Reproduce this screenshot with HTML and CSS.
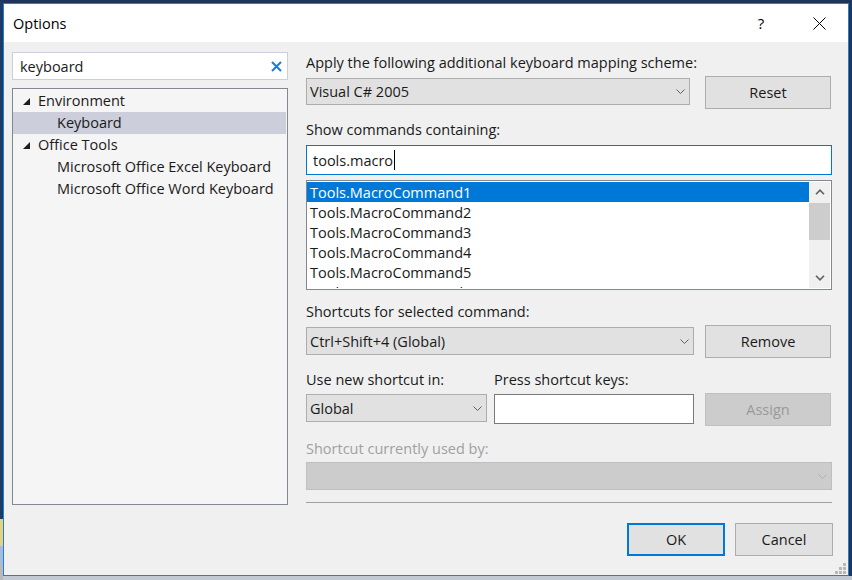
FILE: index.html
```html
<!DOCTYPE html>
<html>
<head>
<meta charset="utf-8">
<link rel="stylesheet" href="styles.css">
</head>
<body>
<div class="win">
  <div class="titlebar">
    <span class="title">Options</span>
    <span class="tb-btn help">?</span>
    <span class="tb-btn close"><svg width="13" height="13" viewBox="0 0 13 13"><path d="M0.5 0.5 L12.5 12.5 M12.5 0.5 L0.5 12.5" stroke="#000" stroke-width="1" fill="none"/></svg></span>
  </div>
  <div class="content">
    <div class="left">
      <div class="search">
        <span>keyboard</span>
        <svg class="clear" width="11" height="11" viewBox="0 0 11 11"><path d="M1 1 L10 10 M10 1 L1 10" stroke="#1e7bd6" stroke-width="2" fill="none"/></svg>
      </div>
      <div class="tree">
        <div class="node"><span class="tw"><svg width="7" height="7" viewBox="0 0 7 7"><polygon points="7,0 7,7 0,7" fill="#1e1e1e"/></svg></span>Environment</div>
        <div class="node child sel">Keyboard</div>
        <div class="node"><span class="tw"><svg width="7" height="7" viewBox="0 0 7 7"><polygon points="7,0 7,7 0,7" fill="#1e1e1e"/></svg></span>Office Tools</div>
        <div class="node child">Microsoft Office Excel Keyboard</div>
        <div class="node child">Microsoft Office Word Keyboard</div>
      </div>
    </div>
    <div class="right">
      <div class="lbl">Apply the following additional keyboard mapping scheme:</div>
      <div class="row r1">
        <div class="combo c1"><span>Visual C# 2005</span><svg class="chev" width="9" height="5" viewBox="0 0 9 5"><path d="M0.5 0.5 L4.5 4.5 L8.5 0.5" stroke="#606060" fill="none"/></svg></div>
        <div class="btn">Reset</div>
      </div>
      <div class="lbl l2">Show commands containing:</div>
      <div class="input focus"><span>tools.macro</span><span class="caret"></span></div>
      <div class="list">
        <div class="items">
          <div class="item sel">Tools.MacroCommand1</div>
          <div class="item">Tools.MacroCommand2</div>
          <div class="item">Tools.MacroCommand3</div>
          <div class="item">Tools.MacroCommand4</div>
          <div class="item">Tools.MacroCommand5</div>
          <div class="item">Tools.MacroCommand10</div>
        </div>
        <div class="sbar">
          <div class="arrow"><svg width="10" height="6" viewBox="0 0 10 6"><path d="M1 5.2 L5 1.2 L9 5.2" stroke="#606060" stroke-width="1.6" fill="none"/></svg></div>
          <div class="thumb"></div>
          <div class="track"></div>
          <div class="arrow"><svg width="10" height="6" viewBox="0 0 10 6"><path d="M1 0.8 L5 4.8 L9 0.8" stroke="#606060" stroke-width="1.6" fill="none"/></svg></div>
        </div>
      </div>
      <div class="lbl l3">Shortcuts for selected command:</div>
      <div class="row r2">
        <div class="combo c2"><span>Ctrl+Shift+4 (Global)</span><svg class="chev" width="9" height="5" viewBox="0 0 9 5"><path d="M0.5 0.5 L4.5 4.5 L8.5 0.5" stroke="#606060" fill="none"/></svg></div>
        <div class="btn">Remove</div>
      </div>
      <div class="lbl l4"><span class="lbl-a">Use new shortcut in:</span><span>Press shortcut keys:</span></div>
      <div class="row r3">
        <div class="combo c3"><span>Global</span><svg class="chev" width="9" height="5" viewBox="0 0 9 5"><path d="M0.5 0.5 L4.5 4.5 L8.5 0.5" stroke="#606060" fill="none"/></svg></div>
        <div class="input keys"></div>
        <div class="btn disabled">Assign</div>
      </div>
      <div class="lbl l5 dis">Shortcut currently used by:</div>
      <div class="combo c4 dis-combo"><span></span><svg class="chev" width="9" height="5" viewBox="0 0 9 5"><path d="M0.5 0.5 L4.5 4.5 L8.5 0.5" stroke="#b0b0b0" fill="none"/></svg></div>
      <div class="sep"></div>
      <div class="footer">
        <div class="btn fbtn ok">OK</div>
        <div class="btn fbtn">Cancel</div>
      </div>
    </div>
  </div>
  <svg class="grip" width="11" height="11" viewBox="0 0 11 11">
    <rect x="8" y="0" width="3" height="3" fill="#b8b8b8"/>
    <rect x="4" y="4" width="3" height="3" fill="#b8b8b8"/>
    <rect x="8" y="4" width="3" height="3" fill="#b8b8b8"/>
    <rect x="0" y="8" width="3" height="3" fill="#b8b8b8"/>
    <rect x="4" y="8" width="3" height="3" fill="#b8b8b8"/>
    <rect x="8" y="8" width="3" height="3" fill="#b8b8b8"/>
  </svg>
</div>
</body>
</html>
```
FILE: styles.css
```css
html, body {
  margin: 0;
  padding: 0;
}
body {
  width: 852px;
  height: 580px;
  overflow: hidden;
  font-family: "Open Sans", "Noto Sans", sans-serif;
  font-size: 14.5px;
  color: #1a1a1a;
  background:
    linear-gradient(to bottom, #1f3a63 0, #1f3a63 519px, #e6d27c 519px, #e6d27c 546px, #a7bcd6 546px, #a7bcd6 564px, #b9b9b9 564px) left top / 3px 100% no-repeat,
    linear-gradient(to bottom, #1f355a 0, #1f355a 576px, #c3c9d3 576px);
}
.win {
  position: relative;
  margin: 3px 0 0 3px;
  width: 846px;
  height: 573px;
  box-sizing: border-box;
  border: 1px solid #1883d7;
  background: #f0f0f0;
  display: flex;
  flex-direction: column;
}
.titlebar {
  height: 38px;
  background: #fff;
  display: flex;
  align-items: center;
  padding: 0 6px 0 9px;
  flex: none;
}
.title {
  flex: 1;
  color: #000;
}
.tb-btn {
  width: 46px;
  height: 38px;
  display: flex;
  align-items: center;
  justify-content: center;
  color: #000;
}
.help {
  font-size: 15px;
  margin-right: 12px;
}
.content {
  display: flex;
  flex: 1;
  padding-left: 8px;
}
.left {
  width: 276px;
  padding-top: 10px;
  flex: none;
}
.search {
  height: 28px;
  box-sizing: border-box;
  border: 1px solid #cccedb;
  background: #fff;
  display: flex;
  align-items: center;
  justify-content: space-between;
  padding: 0 5px 0 7px;
}
.tree {
  margin-top: 8px;
  height: 417px;
  box-sizing: border-box;
  border: 1px solid #828790;
  background: #f5f5f5;
  padding-top: 1px;
}
.node {
  height: 22px;
  box-sizing: border-box;
  padding-bottom: 2px;
  display: flex;
  align-items: center;
  white-space: nowrap;
}
.tw {
  width: 25px;
  display: flex;
  align-items: center;
  padding-left: 10px;
  padding-top: 2px;
  box-sizing: border-box;
}
.child {
  padding-left: 44px;
}
.node.sel {
  background: #cccedb;
  margin-right: 1px;
}
.right {
  width: 526px;
  margin-left: 18px;
  padding-top: 11px;
  flex: none;
  display: flex;
  flex-direction: column;
}
.lbl {
  height: 20px;
  line-height: 20px;
  white-space: nowrap;
}
.row {
  display: flex;
  align-items: flex-start;
  margin-top: 3px;
  height: 33px;
}
.combo {
  box-sizing: border-box;
  border: 1px solid #adadad;
  background: #e1e1e1;
  display: flex;
  align-items: center;
  justify-content: space-between;
  padding: 0 4px 0 3px;
  height: 28px;
}
.chev {
  display: block;
}
.btn {
  box-sizing: border-box;
  border: 1px solid #adadad;
  background: #e1e1e1;
  display: flex;
  align-items: center;
  justify-content: center;
  width: 126px;
  height: 33px;
}
.c1 {
  width: 384px;
  height: 27px;
  margin-top: 2px;
  margin-right: 15px;
}
.c2 {
  width: 388px;
  margin-top: 2px;
  margin-right: 11px;
}
.c3 {
  width: 181px;
  margin-top: 1px;
  margin-right: 7px;
}
.l2 {
  margin-top: 11px;
}
.input {
  box-sizing: border-box;
  background: #fff;
  display: flex;
  align-items: center;
}
.input.focus {
  margin-top: 5px;
  height: 30px;
  border: 1px solid #0078d7;
  padding-left: 6px;
}
.caret {
  width: 1px;
  height: 20px;
  background: #000;
  margin-left: 1px;
}
.list {
  margin-top: 5px;
  height: 110px;
  box-sizing: border-box;
  border: 1px solid #828790;
  background: #fff;
  display: flex;
  padding: 1px 1px 1px 0;
}
.items {
  flex: 1;
  overflow: hidden;
}
.item {
  height: 20px;
  box-sizing: border-box;
  padding-top: 1px;
  line-height: 19px;
  padding-left: 3px;
  white-space: nowrap;
}
.item.sel {
  background: #0078d7;
  color: #fff;
}
.sbar {
  width: 21px;
  background: #f0f0f0;
  display: flex;
  flex-direction: column;
}
.arrow {
  height: 20px;
  display: flex;
  align-items: center;
  justify-content: center;
}
.thumb {
  height: 37px;
  margin-top: 1px;
  background: #cdcdcd;
}
.track {
  flex: 1;
}
.l3 {
  margin-top: 12px;
}
.l4 {
  margin-top: 12px;
  display: flex;
}
.lbl-a {
  width: 188px;
}
.r3 {
  margin-top: 3px;
}
.input.keys {
  width: 200px;
  height: 30px;
  margin-top: 1px;
  margin-right: 11px;
  border: 1px solid #7a7a7a;
}
.btn.disabled {
  background: #cccccc;
  border-color: #bfbfbf;
  color: #9a9a9a;
}
.l5 {
  margin-top: 13px;
}
.dis {
  color: #a0a0a0;
}
.dis-combo {
  margin-top: 3px;
  background: #cccccc;
  border-color: #bfbfbf;
}
.sep {
  margin-top: 12px;
  height: 1px;
  background: #a0a0a0;
}
.footer {
  margin-top: 20px;
  display: flex;
  justify-content: flex-end;
  margin-right: -1px;
}
.fbtn {
  width: 98px;
  margin-left: 10px;
}
.ok {
  border: 2px solid #0078d7;
}
.grip {
  position: absolute;
  right: 2px;
  bottom: 1px;
}
```
